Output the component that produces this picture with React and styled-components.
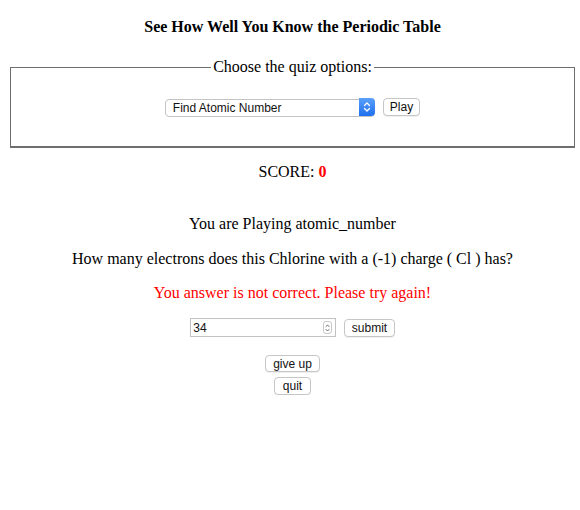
import React from "react";
import styled, { createGlobalStyle } from "styled-components";

const Global = createGlobalStyle`
  html, body { margin: 0; padding: 0; background: #fff; overflow: hidden; }
  body { font-family: "Liberation Serif", "Times New Roman", serif; color: #000; }
`;

const Page = styled.div`
  width: 569px;
  padding: 0 0 0 8px;
  display: flex;
  flex-direction: column;
  align-items: stretch;
`;

const Title = styled.h1`
  margin: 18px 0 0;
  font-size: 16px;
  font-weight: bold;
  line-height: 18px;
  text-align: center;
`;

const Options = styled.fieldset`
  margin: 22px 2px 0;
  padding: 0 12px;
  border: 1px solid #6e6e6e;
  border-bottom-width: 2px;
  height: 90px;
  box-sizing: border-box;
  display: flex;
  justify-content: center;
  align-items: flex-start;
`;

const Legend = styled.legend`
  margin: 0 auto;
  padding: 0 2px;
  font-size: 16px;
  line-height: 18px;
`;

const Controls = styled.div`
  display: flex;
  align-items: center;
  gap: 8px;
  margin-top: 22px;
`;

const SelectWrap = styled.div`
  position: relative;
  width: 210px;
  height: 18px;
`;

const Select = styled.select`
  appearance: none;
  -webkit-appearance: none;
  width: 100%;
  height: 100%;
  box-sizing: border-box;
  margin: 0;
  padding: 0 24px 0 7px;
  border: 1px solid #c4c4c4;
  border-radius: 4px;
  background: #fff;
  font-family: "Liberation Sans", Arial, sans-serif;
  font-size: 12px;
  color: #111;
  outline: none;
`;

const Stepper = styled.div`
  position: absolute;
  top: 0;
  right: 0;
  width: 16px;
  height: 18px;
  border-radius: 0 4px 4px 0;
  background: linear-gradient(#5aa0fa, #1f6ff0);
  display: flex;
  align-items: center;
  justify-content: center;
  pointer-events: none;
`;

const Button = styled.button`
  margin: 0;
  height: ${(p) => p.$h || 18}px;
  box-sizing: border-box;
  padding: 0 ${(p) => p.$pad || 6}px;
  border: 1px solid #c6c6c6;
  border-radius: 4px;
  background: #fff;
  font-family: "Liberation Sans", Arial, sans-serif;
  font-size: 12px;
  color: #111;
  line-height: 16px;
  box-shadow: 0 1px 0 rgba(0, 0, 0, 0.06);
`;

const Line = styled.p`
  margin: ${(p) => p.$top}px 0 0;
  font-size: 16px;
  line-height: 18px;
  text-align: center;
  color: ${(p) => (p.$error ? "#ff0000" : "#000")};
`;

const Score = styled.span`
  color: #ff0000;
  font-weight: bold;
`;

const AnswerRow = styled.div`
  display: flex;
  justify-content: center;
  align-items: center;
  gap: 8px;
  margin-top: 16px;
`;

const NumberWrap = styled.div`
  position: relative;
  width: 146px;
  height: 19px;
  box-sizing: border-box;
  border: 1px solid #c2c2c2;
  background: #fff;
  display: flex;
  align-items: center;
`;

const NumberInput = styled.input`
  border: none;
  outline: none;
  width: 100%;
  padding: 0 18px 0 2px;
  box-sizing: border-box;
  font-family: "Liberation Sans", Arial, sans-serif;
  font-size: 12px;
  color: #111;
  background: transparent;
  -moz-appearance: textfield;
  &::-webkit-inner-spin-button, &::-webkit-outer-spin-button {
    -webkit-appearance: none;
    margin: 0;
  }
`;

const Spin = styled.div`
  position: absolute;
  right: 3px;
  top: 2px;
  width: 9px;
  height: 13px;
  box-sizing: border-box;
  border: 1px solid #c8c8c8;
  border-radius: 3px;
  display: flex;
  align-items: center;
  justify-content: center;
  pointer-events: none;
`;

const Stack = styled.div`
  display: flex;
  flex-direction: column;
  align-items: center;
  gap: 5px;
  margin-top: 18px;
`;

export default function App() {
  return (
    <>
      <Global />
      <Page>
        <Title>See How Well You Know the Periodic Table</Title>
        <Options>
          <Legend>Choose the quiz options:</Legend>
          <Controls>
            <SelectWrap>
              <Select defaultValue="atomic_number">
                <option value="atomic_number">Find Atomic Number</option>
              </Select>
              <Stepper>
                <svg width="8" height="12" viewBox="0 0 8 12" fill="none" stroke="#fff" strokeWidth="1.3" strokeLinecap="round" strokeLinejoin="round">
                  <path d="M1.5 4.5 L4 2 L6.5 4.5" />
                  <path d="M1.5 7.5 L4 10 L6.5 7.5" />
                </svg>
              </Stepper>
            </SelectWrap>
            <Button $pad={6}>Play</Button>
          </Controls>
        </Options>
        <Line $top={15}>
          SCORE: <Score>0</Score>
        </Line>
        <Line $top={34}>You are Playing atomic_number</Line>
        <Line $top={17}>
          How many electrons does this Chlorine with a (-1) charge ( Cl ) has?
        </Line>
        <Line $top={16} $error>
          You answer is not correct. Please try again!
        </Line>
        <AnswerRow>
          <NumberWrap>
            <NumberInput type="number" defaultValue="34" />
            <Spin>
              <svg width="5" height="10" viewBox="0 0 5 10" fill="none" stroke="#555" strokeWidth="0.9" strokeLinecap="round" strokeLinejoin="round">
                <path d="M1 3.5 L2.5 2 L4 3.5" />
                <path d="M1 6.5 L2.5 8 L4 6.5" />
              </svg>
            </Spin>
          </NumberWrap>
          <Button $pad={6.5}>submit</Button>
        </AnswerRow>
        <Stack>
          <Button $pad={7} $h={17}>give up</Button>
          <Button $pad={8}>quit</Button>
        </Stack>
      </Page>
    </>
  );
}
